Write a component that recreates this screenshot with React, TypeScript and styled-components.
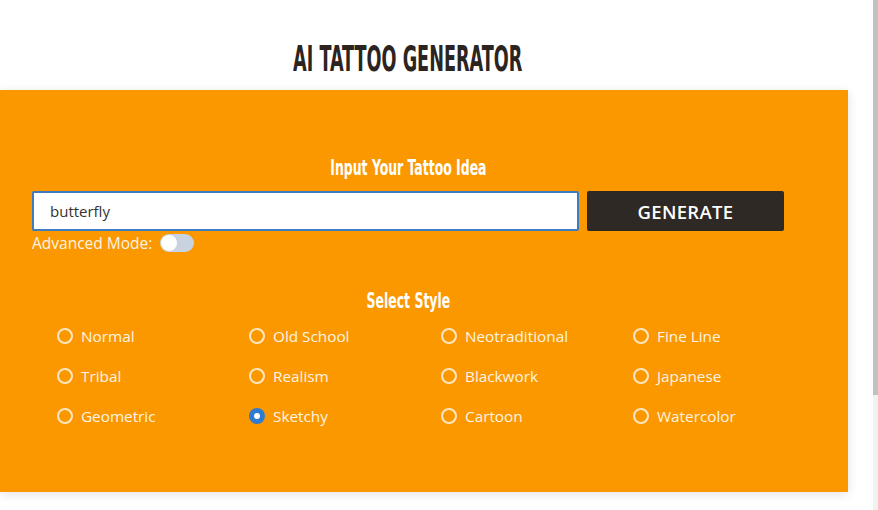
import React, { useState } from "react";
import styled, { createGlobalStyle } from "styled-components";

const GlobalStyle = createGlobalStyle`
  html, body { margin: 0; padding: 0; background: #ffffff; }
  body { font-family: "Open Sans", "Noto Sans", sans-serif; }
  * { box-sizing: border-box; }
`;

const Page = styled.div`
  display: flex;
  width: 878px;
  height: 510px;
  overflow: hidden;
  background: #ffffff;
`;

const Main = styled.div`
  flex: 1;
  display: flex;
  flex-direction: column;
`;

const Header = styled.header`
  width: 816px;
  height: 90px;
  display: flex;
  justify-content: center;
  padding-top: 38px;
`;

const Condensed = styled.span<{ $scale: number }>`
  display: inline-block;
  font-family: "Liberation Sans Narrow", "DejaVu Sans Condensed", "Liberation Sans", sans-serif;
  font-weight: 700;
  transform: scaleX(${(p) => p.$scale});
  transform-origin: center;
  white-space: nowrap;
`;

const Heading = styled.h1`
  margin: 0;
  font-size: 35px;
  line-height: 40px;
  color: #2b2420;
  font-weight: 700;
`;

const Panel = styled.section`
  width: 848px;
  height: 402px;
  background: #fb9800;
  box-shadow: 0 2px 10px rgba(0, 0, 0, 0.12);
  padding: 64px 0 0 32px;
`;

const Inner = styled.div`
  width: 752px;
  display: flex;
  flex-direction: column;
`;

const SectionTitle = styled.h2<{ $mt: number }>`
  margin: ${(p) => p.$mt}px 0 0;
  text-align: center;
  color: #ffffff;
  font-size: 21px;
  line-height: 26px;
  font-weight: 700;
`;

const InputRow = styled.div`
  display: flex;
  gap: 8px;
  margin-top: 10px;
  height: 40px;
`;

const TextInput = styled.input`
  width: 547px;
  height: 40px;
  border: 2px solid #3d7cc0;
  border-radius: 2px;
  background: #ffffff;
  padding: 0 16px;
  font-family: "Open Sans", "Noto Sans", sans-serif;
  font-size: 15px;
  color: #333333;
  outline: none;
`;

const GenerateButton = styled.button`
  width: 197px;
  height: 40px;
  border: none;
  border-radius: 2px;
  background: #2e2925;
  color: #ffffff;
  font-family: "Open Sans", "Noto Sans", sans-serif;
  font-weight: 600;
  font-size: 18.5px;
  letter-spacing: 0.3px;
  cursor: pointer;
`;

const AdvancedRow = styled.label`
  display: flex;
  align-items: center;
  gap: 8px;
  height: 22px;
  margin-top: 1px;
  color: #fff4e3;
  font-size: 15.5px;
`;

const Toggle = styled.span<{ $on: boolean }>`
  position: relative;
  width: 34px;
  height: 18px;
  border-radius: 9px;
  background: ${(p) => (p.$on ? "#2f7bd0" : "#c9d3e0")};
  &::after {
    content: "";
    position: absolute;
    top: 1px;
    left: ${(p) => (p.$on ? "17px" : "1px")};
    width: 16px;
    height: 16px;
    border-radius: 50%;
    background: #ffffff;
  }
`;

const StyleGrid = styled.div`
  display: grid;
  grid-template-columns: repeat(4, 192px);
  grid-auto-rows: 40px;
  margin: 2px 0 0 25px;
`;

const Option = styled.label`
  display: flex;
  align-items: center;
  gap: 8px;
  color: #fff4e3;
  font-size: 15.3px;
  cursor: pointer;
`;

const Radio = styled.span<{ $checked: boolean }>`
  position: relative;
  width: 16px;
  height: 16px;
  border-radius: 50%;
  border: ${(p) => (p.$checked ? "none" : "2px solid rgba(255, 244, 227, 0.85)")};
  background: ${(p) => (p.$checked ? "#2f7bd0" : "transparent")};
  &::after {
    content: "";
    display: ${(p) => (p.$checked ? "block" : "none")};
    position: absolute;
    top: 5px;
    left: 5px;
    width: 6px;
    height: 6px;
    border-radius: 50%;
    background: #ffffff;
  }
`;

const ScrollTrack = styled.div`
  width: 5px;
  display: flex;
  flex-direction: column;
  background: #f1f1f1;
`;

const ScrollThumb = styled.div`
  height: 395px;
  background: #c1c1c1;
`;

const STYLES = [
  "Normal", "Old School", "Neotraditional", "Fine Line",
  "Tribal", "Realism", "Blackwork", "Japanese",
  "Geometric", "Sketchy", "Cartoon", "Watercolor",
];

export default function App() {
  const [idea, setIdea] = useState("butterfly");
  const [selected, setSelected] = useState("Sketchy");
  const [advanced, setAdvanced] = useState(false);

  return (
    <>
      <GlobalStyle />
      <Page>
        <Main>
          <Header>
            <Heading>
              <Condensed $scale={0.56}>AI TATTOO GENERATOR</Condensed>
            </Heading>
          </Header>
          <Panel>
            <Inner>
              <SectionTitle $mt={0}>
                <Condensed $scale={0.66}>Input Your Tattoo Idea</Condensed>
              </SectionTitle>
              <InputRow>
                <TextInput value={idea} onChange={(e) => setIdea(e.target.value)} />
                <GenerateButton>GENERATE</GenerateButton>
              </InputRow>
              <AdvancedRow onClick={() => setAdvanced(!advanced)}>
                Advanced Mode:
                <Toggle $on={advanced} />
              </AdvancedRow>
              <SectionTitle $mt={33}>
                <Condensed $scale={0.66}>Select Style</Condensed>
              </SectionTitle>
              <StyleGrid>
                {STYLES.map((s) => (
                  <Option key={s} onClick={() => setSelected(s)}>
                    <Radio $checked={selected === s} />
                    {s}
                  </Option>
                ))}
              </StyleGrid>
            </Inner>
          </Panel>
        </Main>
        <ScrollTrack>
          <ScrollThumb />
        </ScrollTrack>
      </Page>
    </>
  );
}
